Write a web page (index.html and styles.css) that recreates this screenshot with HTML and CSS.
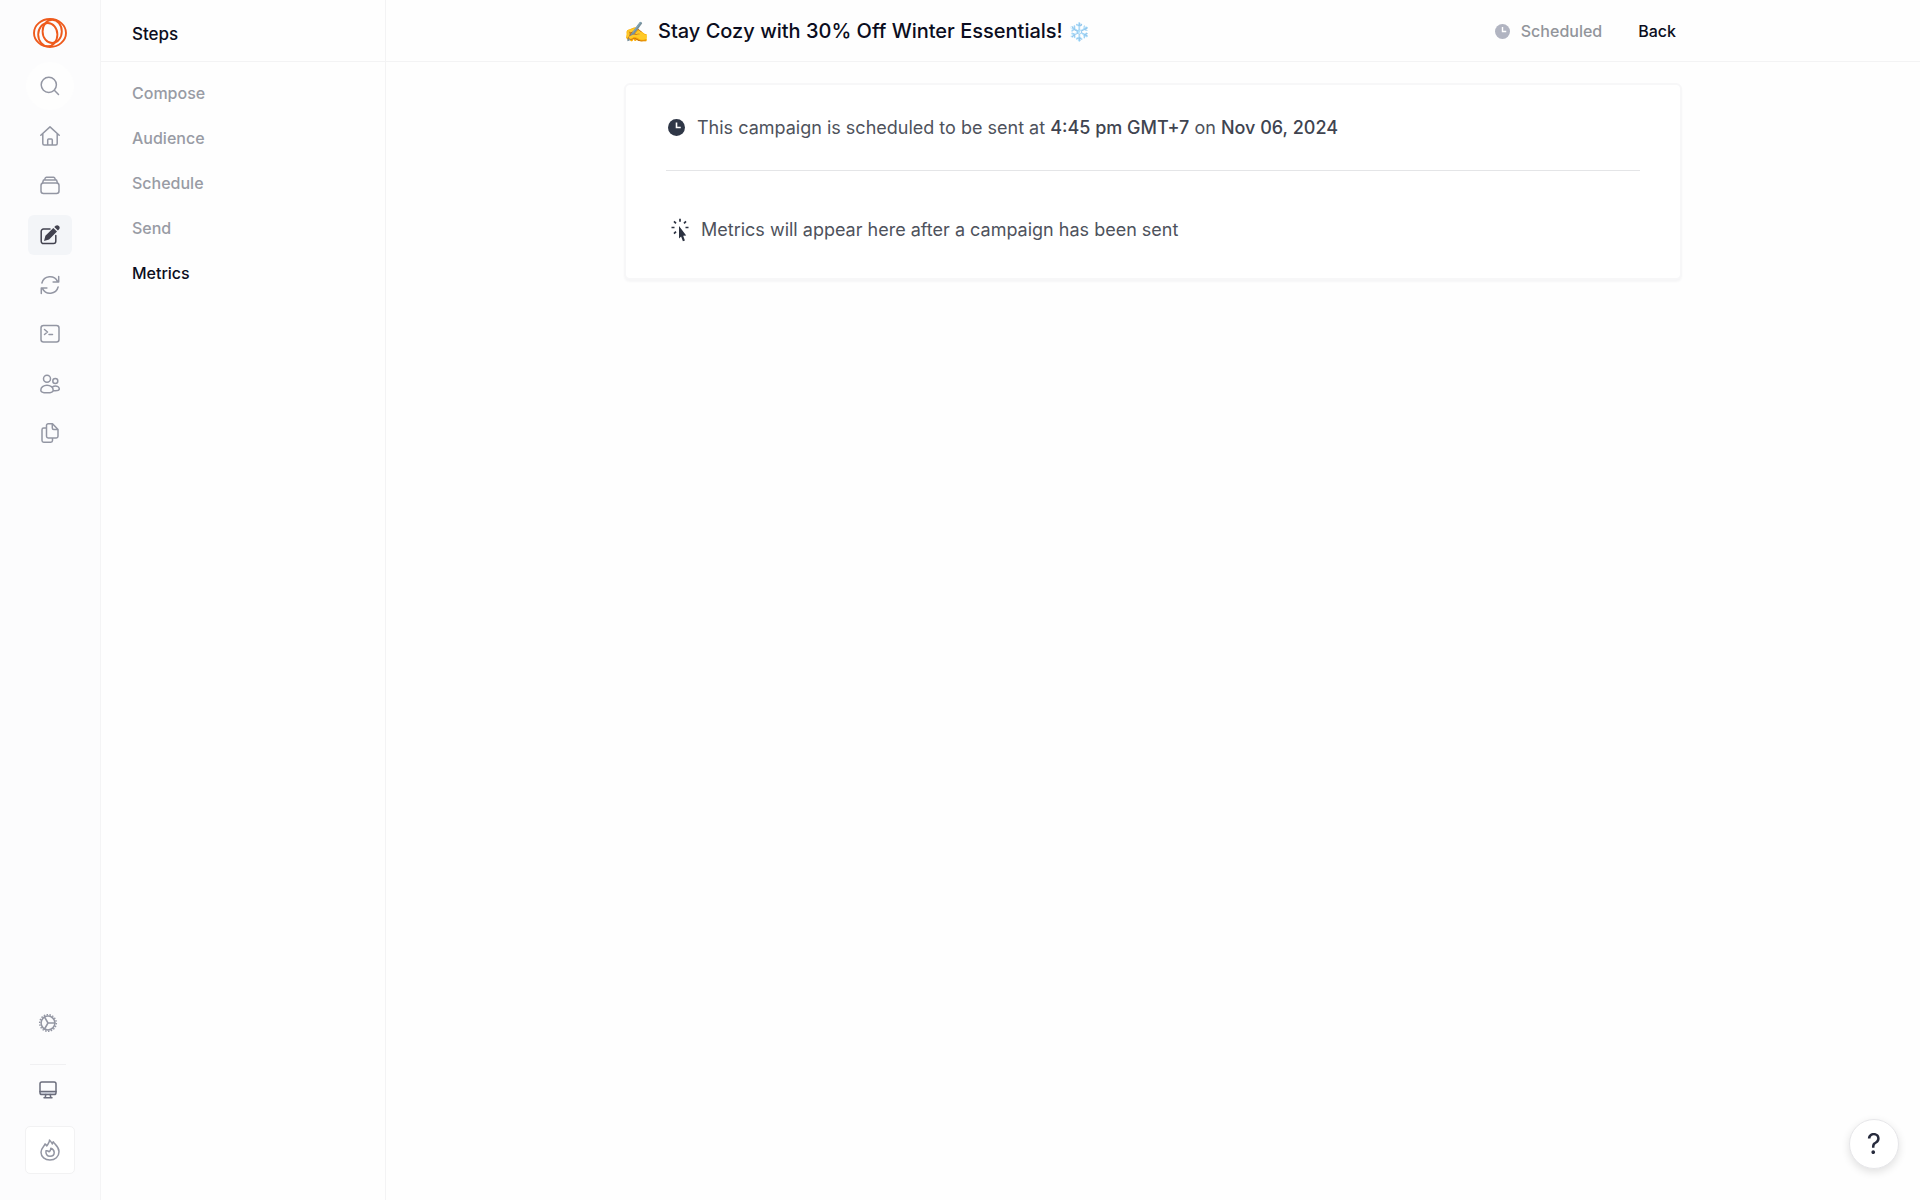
FILE: index.html
```
<!DOCTYPE html>
<html lang="en">
<head>
<meta charset="utf-8">
<title>Stay Cozy with 30% Off Winter Essentials!</title>
<link rel="stylesheet" href="styles.css">
</head>
<body>
<div class="app">
  <aside class="rail">
    <a class="logo" href="#" aria-label="Home page">
      <svg width="34" height="30" viewBox="0 0 34 30">
        <ellipse cx="17" cy="15" rx="16" ry="14"/>
        <ellipse cx="14.800" cy="16.600" rx="9.600" ry="11.600"/>
        <ellipse cx="19.200" cy="13.400" rx="9.600" ry="11.600"/>
      </svg>
    </a>
    <button class="search" type="button" aria-label="Search">
      <svg width="20" height="20" viewBox="0 0 20 20"><circle cx="8.800" cy="8.800" r="7.600"/><path d="M14.300 14.300 18.500 18.500"/></svg>
    </button>
    <nav class="rail-nav" aria-label="Main">
      <a class="rail-link" href="#" aria-label="Home"><svg width="20" height="20" viewBox="0 0 20 20"><path d="M.8 9.300 10 .9l9.200 8.400M2.800 7.800v9.700c0 .9.600 1.500 1.500 1.500h11.400c.9 0 1.500-.6 1.500-1.500V7.800M7.700 19v-5c0-.5.400-.9.900-.9h2.800c.5 0 .9.400.9.900v5"/></svg></a>
      <a class="rail-link" href="#" aria-label="Library"><svg width="20" height="20" viewBox="0 0 20 20"><rect x="1" y="7" width="18" height="10.500" rx="2.500"/><path d="M2.500 7.100 3.500 4h13l1 3.100M4.500 3.800l.6-1.500c.2-.6.700-1 1.300-1h7.200c.6 0 1.100.4 1.300 1l.6 1.500"/></svg></a>
      <a class="rail-link current" href="#" aria-label="Campaigns" aria-current="page"><svg width="20" height="20" viewBox="0 0 20 20"><path d="M10 4H3.500A2.300 2.300 0 0 0 1.200 6.300v10A2.300 2.300 0 0 0 3.500 18.600h10a2.300 2.300 0 0 0 2.300-2.300V10.500"/><path class="solid" d="M4 16 5.400 10.800 13.300 2.900l3.700 3.700-7.900 7.900zM14.300 2l1.300-1.200a2.500 2.500 0 0 1 3.500 3.500l-1.200 1.300z"/></svg></a>
      <a class="rail-link" href="#" aria-label="Automations"><svg width="20" height="20" viewBox="0 0 20 20"><path d="M1.900 8a8.400 8.400 0 0 1 15.600-1.700M18.100 12a8.400 8.400 0 0 1-15.600 1.700M18.700 1.500v5.600h-5.600M1.300 18.500v-5.600h5.600"/></svg></a>
      <a class="rail-link" href="#" aria-label="Transactional"><svg width="20" height="20" viewBox="0 0 20 20"><rect x="1" y="1.500" width="18" height="16.500" rx="2.500"/><path d="m4.500 5.500 3 2.500-3 2.500M9 10.500h3.500"/></svg></a>
      <a class="rail-link" href="#" aria-label="Audience"><svg width="20" height="20" viewBox="0 0 20 20"><circle cx="7" cy="4.700" r="3.500"/><circle cx="15.300" cy="7" r="2.500"/><path d="M7 11.200c-3.500 0-6.200 2.300-6.200 5 0 1.800 2.800 2.600 6.200 2.600s6.200-.8 6.200-2.600c0-2.700-2.700-5-6.200-5zM12.500 12.800c.8-.6 1.700-.9 2.800-.9 2.200 0 4 1.400 4 3.200 0 1.200-1.700 1.700-3.900 1.700-.8 0-1.400 0-2-.1"/></svg></a>
      <a class="rail-link" href="#" aria-label="Forms"><svg width="20" height="20" viewBox="0 0 20 20"><path d="M6.500 5H3.700A1.700 1.700 0 0 0 2 6.700v10.800a1.700 1.700 0 0 0 1.700 1.700h7.100a1.700 1.700 0 0 0 1.700-1.700V15M6.500 2.500v10.800A1.700 1.700 0 0 0 8.200 15h8.100a1.700 1.700 0 0 0 1.700-1.700V6.500L12.500.8H8.200a1.700 1.700 0 0 0-1.700 1.700zM12.300 1v4c0 .9.600 1.500 1.500 1.500h4"/></svg></a>
    </nav>
    <div class="rail-foot">
      <a class="foot-link" href="#" aria-label="Settings"><svg width="20" height="20" viewBox="0 0 20 20"><circle cx="10" cy="10" r="6.900"/><circle class="teeth" cx="10" cy="10" r="8.300" pathLength="54"/><path d="M10 10h6.900M10 10 6.500 4M10 10 6.500 16"/></svg></a>
      <hr class="rail-rule">
      <a class="foot-link dark" href="#" aria-label="Desktop"><svg width="20" height="20" viewBox="0 0 20 20"><path fill="#d9dce6" stroke="none" d="M2 11.500h16v3H2z"/><rect x="2" y="2" width="16" height="12.500" rx="1.800"/><path d="M2 11.500h16M7.800 14.500l-.6 3.200M12.200 14.500l.6 3.200M6 17.700h8"/></svg></a>
      <button class="workspace" type="button" aria-label="Workspace"><svg width="20" height="22" viewBox="0 0 20 22"><path d="M9.500 1C9.800 3.500 7.800 5 6.800 7 6.500 6.300 5.800 5.500 5 5 4.500 7.500 1 9 1 13.200 1 17.800 5 21 10 21s9-3.400 9-8.300C19 7 14.500 5.500 13.300 2.800 12.700 3.500 12.500 4.200 12.400 5 11.500 3.500 10.700 2 9.500 1z"/><path d="M10.800 9.200c.1 1.800-.7 2.800-1.800 3.600-.8-.9-1.900-1.300-3-1-.6 3.200 1.200 5.500 4 5.500 2.400 0 4.200-1.500 4.200-3.800 0-1.900-1.200-3.500-3.400-4.300z"/></svg></button>
    </div>
  </aside>

  <aside class="steps">
    <h2 class="steps-title">Steps</h2>
    <nav class="steps-nav" aria-label="Steps">
      <a href="#">Compose</a>
      <a href="#">Audience</a>
      <a href="#">Schedule</a>
      <a href="#">Send</a>
      <a class="active" href="#" aria-current="step">Metrics</a>
    </nav>
  </aside>

  <div class="page">
    <header class="topbar">
      <div class="topbar-inner">
        <h1 class="title"><span>✍️</span><span>Stay Cozy with 30% Off Winter Essentials! <span class="flake">❄️</span></span></h1>
        <div class="status"><svg width="15" height="15" viewBox="0 0 16 16"><circle cx="8" cy="8" r="8" fill="#b1b4c1"/><path d="M8 3.300V8h4" fill="none" stroke="#fff" stroke-width="1.500"/></svg><span>Scheduled</span></div>
        <a class="back" href="#">Back</a>
      </div>
    </header>
    <main class="content">
      <section class="card">
        <p class="line"><svg width="17" height="17" viewBox="0 0 16 16"><circle cx="8" cy="8" r="8" fill="#2f3747"/><path d="M8 3.300V8h4" fill="none" stroke="#fff" stroke-width="1.500"/></svg><span>This campaign is scheduled to be sent at <strong>4:45 pm GMT+7</strong> on <strong>Nov 06, 2024</strong></span></p>
        <p class="line metrics"><svg width="18" height="24" viewBox="0 0 18 24"><path d="M9 .8v3M.5 9.500h3M14.500 9.500h3M3 3.300l2 2M15 3.300l-2 2M3 15.700l2-2" fill="none" stroke="#2b3140" stroke-width="1.700"/><path d="M8 8l7.200 9.500-3 .3 1.700 4.700-2 .8-1.800-4.800L8 20.500z" fill="#2b3140"/></svg><span>Metrics will appear here after a campaign has been sent</span></p>
      </section>
    </main>
  </div>
</div>
<button class="help" type="button" aria-label="Help">?</button>
</body>
</html>
```
FILE: styles.css
```
* {
  box-sizing: border-box;
}

body {
  margin: 0;
  background: #fefefe;
  color: #0b0d20;
  font-family: Inter, "Liberation Sans", sans-serif;
  font-size: 16px;
  line-height: 24px;
}

h1, h2, p {
  margin: 0;
  font-weight: 500;
}

a {
  color: inherit;
  text-decoration: none;
}

button {
  padding: 0;
  border: 0;
  background: #fff;
  color: inherit;
  font: inherit;
  cursor: pointer;
}

svg {
  display: block;
  flex: none;
}

.app {
  display: flex;
  min-height: 100vh;
}

/* Icon rail */

.rail {
  display: flex;
  flex: none;
  flex-direction: column;
  align-items: center;
  width: 101px;
  padding: 18px 0 26px;
  border-right: 1px solid #f4f4f5;
  background: #fcfcfd;
}

.rail svg {
  fill: none;
  stroke: #9396a3;
  stroke-width: 1.5;
  stroke-linecap: round;
  stroke-linejoin: round;
}

.rail .logo svg {
  stroke: #ee5a1c;
  stroke-width: 1.9;
}

.search {
  display: grid;
  place-items: center;
  width: 48px;
  height: 48px;
  margin-top: 14px;
  border-radius: 50%;
  background: #fefefe;
}

.rail-nav {
  display: flex;
  flex-direction: column;
  justify-content: space-between;
  height: 337px;
  margin-top: 6px;
}

.rail-link {
  display: grid;
  place-items: center;
  width: 44px;
  height: 40px;
  border-radius: 6px;
}

.rail-link.current {
  background: #f3f5f8;
}

.rail-link.current svg {
  stroke: #42424f;
}

.rail-link .solid {
  fill: #42424f;
  stroke: none;
}

.rail-foot {
  display: flex;
  flex-direction: column;
  align-items: center;
  margin-top: auto;
}

.foot-link {
  padding-right: 4px;
}

.rail-foot .dark svg {
  stroke: #6b6d7c;
}

.rail-foot .teeth {
  stroke-linecap: butt;
  stroke-dasharray: 1.5 1.5;
}

.rail-rule {
  width: 36px;
  height: 1px;
  margin: 31px 4px 15px 0;
  border: 0;
  background: #f0f0f2;
}

.workspace {
  display: grid;
  place-items: center;
  width: 50px;
  height: 48px;
  margin-top: 26px;
  border: 1px solid #f2f2f3;
  border-radius: 5px;
}

/* Steps panel */

.steps {
  flex: none;
  width: 285px;
  border-right: 1px solid #f3f3f4;
}

.steps-title {
  height: 62px;
  padding: 22px 31px 0;
  border-bottom: 1px solid #f3f3f4;
  font-size: 17px;
}

.steps-nav {
  display: flex;
  flex-direction: column;
  gap: 21px;
  padding: 19px 31px;
  color: #989ba4;
  font-weight: 500;
}

.steps-nav .active {
  color: #0b0d20;
}

/* Page */

.page {
  flex: 1;
  min-width: 0;
}

.topbar {
  border-bottom: 1px solid #f3f3f4;
}

.topbar-inner {
  display: flex;
  align-items: center;
  max-width: 1058px;
  height: 61px;
  margin: 0 auto;
  padding-right: 6px;
  font-weight: 500;
}

.title {
  display: flex;
  align-items: center;
  gap: 9px;
  margin-right: auto;
  padding-top: 2px;
  font-size: 20px;
}

.flake {
  font-size: 18px;
}

.status {
  display: flex;
  align-items: center;
  gap: 11px;
  margin-right: 36px;
  padding-top: 1px;
  color: #92959b;
}

.content {
  padding: 21px 0;
}

.card {
  max-width: 1058px;
  margin: 0 auto;
  padding: 0 40px;
  border: 2px solid #f7f7f8;
  border-radius: 6px;
  background: #fff;
  box-shadow: 0 2px 2px #f6f6f7;
}

.line {
  display: flex;
  align-items: center;
  gap: 12px;
  height: 86px;
  padding-left: 2px;
  border-bottom: 1px solid #e4e5e7;
  color: #4e525c;
  font-size: 18px;
  font-weight: 400;
}

.line strong {
  color: #404450;
  font-weight: 500;
}

.metrics {
  height: 107px;
  padding: 11px 0 0 5px;
  border-bottom: 0;
}

.help {
  position: fixed;
  right: 21px;
  bottom: 31px;
  width: 50px;
  height: 50px;
  border: 1px solid #e6e6e9;
  border-radius: 50%;
  box-shadow: 0 3px 8px rgb(0 0 0 / 12%);
  color: #272b3d;
  font-size: 28px;
  font-weight: 400;
}
```
